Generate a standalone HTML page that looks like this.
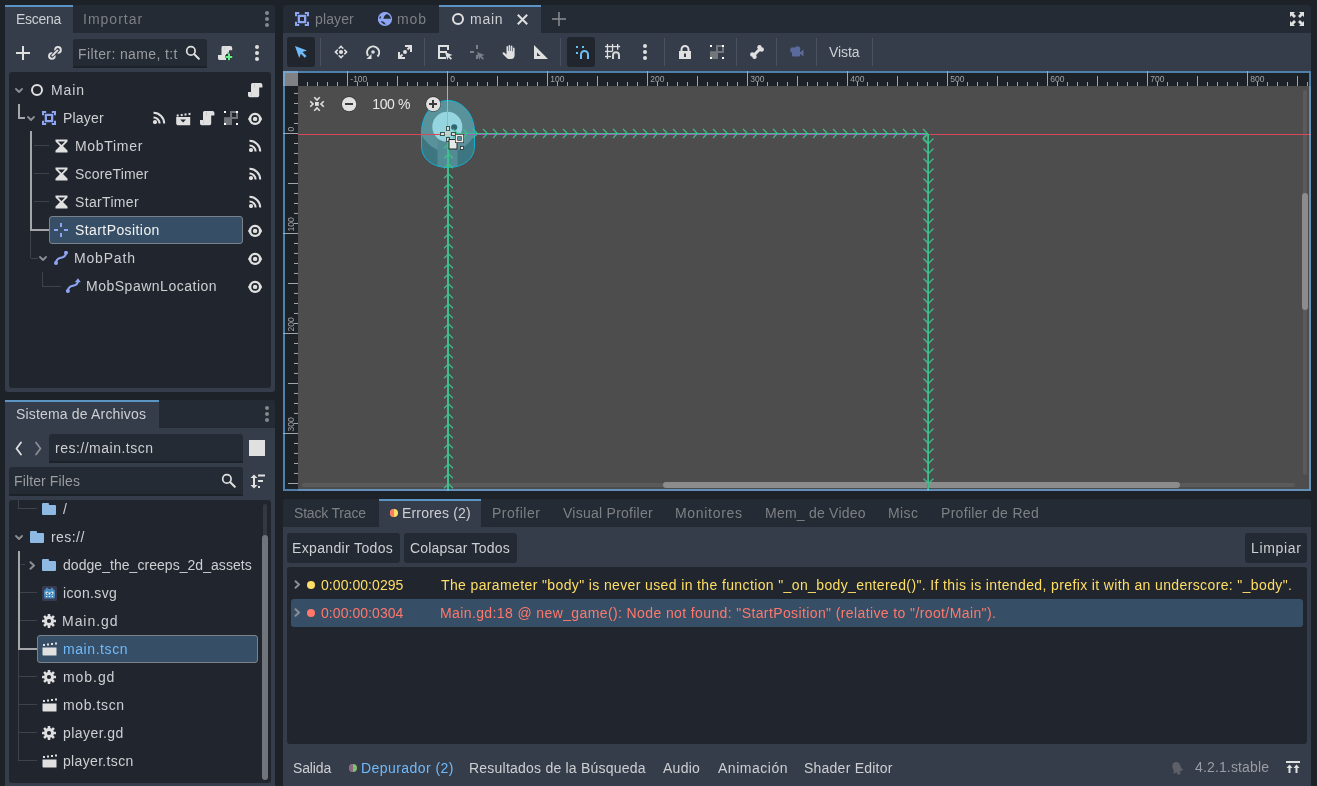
<!DOCTYPE html>
<html><head><meta charset="utf-8"><style>
html,body{margin:0;padding:0;width:1317px;height:786px;overflow:hidden;background:#1d2229;}
body{position:relative;font-family:"Liberation Sans",sans-serif;font-size:14px;}
body>div,body>span,body>svg{position:absolute;display:block;}
body>span{white-space:pre;will-change:transform;}

</style></head><body>
<div style="left:5px;top:5px;width:270px;height:28px;background:#252b34;border-radius:3px 3px 0 0;"></div>
<div style="left:5px;top:5px;width:68px;height:28px;background:#363d4a;"></div>
<div style="left:5px;top:5px;width:68px;height:2px;background:#5c94c6;"></div>
<span style="left:15.50px;top:9px;color:#cdcfd2;font-size:14px;line-height:20px;letter-spacing:-0.282px;">Escena</span>
<span style="left:83.00px;top:9px;color:#7d8085;font-size:14px;line-height:20px;letter-spacing:1.005px;">Importar</span>
<div style="left:264.5px;top:11px;width:4px;height:4px;border-radius:50%;background:#85888d"></div>
<div style="left:264.5px;top:17px;width:4px;height:4px;border-radius:50%;background:#85888d"></div>
<div style="left:264.5px;top:23px;width:4px;height:4px;border-radius:50%;background:#85888d"></div>
<div style="left:5px;top:33px;width:270px;height:359px;background:#363d4a;border-radius:0 0 3px 3px;"></div>
<svg style="left:16px;top:46px" width="14" height="14" viewBox="0 0 14 14"><rect x="6" y="0" width="2" height="14" fill="#e0e0e0"/><rect x="0" y="6" width="14" height="2" fill="#e0e0e0"/></svg>
<svg style="left:45px;top:43px" width="20" height="20" viewBox="0 0 20 20"><g fill="none" stroke-linecap="round"><path d="M9.7 13 A2.8 2.8 0 1 1 6.9 10.2" stroke="#e0e0e0" stroke-width="2"/><path d="M10.2 6.9 A2.8 2.8 0 1 1 13 9.7" stroke="#e0e0e0" stroke-width="2"/><path d="M7.4 12.5 L12.5 7.4" stroke="#363d4a" stroke-width="3.6"/><path d="M7.4 12.5 L12.5 7.4" stroke="#e0e0e0" stroke-width="1.8"/></g></svg>
<div style="left:73px;top:39px;width:134px;height:29px;background:#252b34;border-radius:3px 3px 0 0;box-sizing:border-box;border-bottom:2px solid #1d2229"></div>
<span style="left:78.40px;top:43.5px;color:#9a9ca1;font-size:14px;line-height:20px;letter-spacing:0.383px;">Filter: name, t:t</span>
<svg style="left:185px;top:45px" width="15" height="15" viewBox="0 0 15 15"><g fill="none" stroke="#e0e0e0"><circle cx="5.9" cy="5.9" r="4.2" stroke-width="1.7"/><path d="M9.3 9.3 L13.8 13.8" stroke-width="2" stroke-linecap="round"/></g></svg>
<svg style="left:218px;top:46px" width="15" height="15" viewBox="0 0 15 15"><path fill="#e0e0e0" d="M4.5 0 H12.5 Q14.2 0 14.2 2 V4.2 H11 V8 H8 V14.1 H1.8 Q0 14.1 0 12.5 V9.1 H3.5 V1.8 Q3.5 0 4.5 0Z"/><path fill="#c4c4c4" d="M6.5 0.8 H7.2 V4.2 H6.5Z"/><path fill="#21262e" d="M9.5 6.5 h3 v2.5 h2.5 v3 h-2.5 v3 h-3 v-3 h-2.5 v-3 h2.5z" opacity="0.6"/><path fill="#66f08a" d="M10 7.5 h2 v2.5 h2.3 v2 h-2.3 v2.3 h-2 v-2.3 h-2.2 v-2 h2.2z"/></svg>
<div style="left:254.5px;top:45px;width:4px;height:4px;border-radius:50%;background:#e0e0e0"></div>
<div style="left:254.5px;top:51px;width:4px;height:4px;border-radius:50%;background:#e0e0e0"></div>
<div style="left:254.5px;top:57px;width:4px;height:4px;border-radius:50%;background:#e0e0e0"></div>
<div style="left:9px;top:72px;width:262px;height:316px;background:#21262e;border-radius:3px;"></div>
<div style="left:18px;top:104px;width:2px;height:15px;background:#a4a6aa;"></div>
<div style="left:18px;top:117px;width:7px;height:2px;background:#a4a6aa;"></div>
<div style="left:30px;top:131px;width:2px;height:100px;background:#a4a6aa;"></div>
<div style="left:30px;top:229px;width:19px;height:2px;background:#a4a6aa;"></div>
<div style="left:30px;top:231px;width:1px;height:27px;background:#3d424b;"></div>
<div style="left:31px;top:258px;width:7px;height:1px;background:#3d424b;"></div>
<div style="left:34px;top:145px;width:15px;height:1px;background:#3d424b;"></div>
<div style="left:34px;top:173px;width:15px;height:1px;background:#3d424b;"></div>
<div style="left:34px;top:201px;width:15px;height:1px;background:#3d424b;"></div>
<div style="left:42px;top:272px;width:1px;height:15px;background:#3d424b;"></div>
<div style="left:43px;top:286px;width:18px;height:1px;background:#3d424b;"></div>
<div style="left:49px;top:216px;width:194px;height:28px;background:#374f66;border-radius:3px;box-sizing:border-box;border:1px solid #7b828c"></div>
<svg style="left:15px;top:88px" width="8" height="6" viewBox="0 0 8 6"><path d="M1 1 L4 4 L7 1" fill="none" stroke="#8b8e93" stroke-width="1.8" stroke-linecap="round" stroke-linejoin="round"/></svg>
<svg style="left:31px;top:84px" width="12" height="12" viewBox="0 0 12 12"><circle cx="6" cy="6" r="5" fill="none" stroke="#e0e0e0" stroke-width="2"/></svg>
<span style="left:50.90px;top:80px;color:#cdcfd2;font-size:14px;line-height:20px;letter-spacing:0.914px;">Main</span>
<svg style="left:248px;top:82.8px" width="15" height="15" viewBox="0 0 15 15"><path fill="#e0e0e0" d="M4.5 0 H12.5 Q14.4 0 14.4 2 V4.4 H11.2 V12.5 Q11.2 14.2 9.5 14.2 H1.8 Q0 14.2 0 12.5 V9 H3 V1.8 Q3 0 4.5 0Z"/><path fill="#c4c4c4" d="M6 0.8 H6.8 V4.4 H6Z M3 9 H3.6 V13 H3Z"/></svg>
<svg style="left:27px;top:116px" width="8" height="6" viewBox="0 0 8 6"><path d="M1 1 L4 4 L7 1" fill="none" stroke="#8b8e93" stroke-width="1.8" stroke-linecap="round" stroke-linejoin="round"/></svg>
<svg style="left:42px;top:111px" width="14" height="14" viewBox="0 0 14 14"><g fill="#8da5f3"><path d="M0 0 h4.2 v2 h-2.2 v2.2 h-2z"/><path d="M14 0 h-4.2 v2 h2.2 v2.2 h2z"/><path d="M0 14 h4.2 v-2 h-2.2 v-2.2 h-2z"/><path d="M14 14 h-4.2 v-2 h2.2 v-2.2 h2z"/><path fill-rule="evenodd" d="M2.7 2.7 h8.6 v8.6 h-8.6z M5 5 v4 h4 v-4z"/></g></svg>
<span style="left:62.70px;top:108px;color:#cdcfd2;font-size:14px;line-height:20px;letter-spacing:0.176px;">Player</span>
<svg style="left:152px;top:110px" width="14" height="14" viewBox="0 0 14 14"><g fill="none" stroke="#e0e0e0" stroke-width="2"><path d="M1.5 7.4 A6.1 6.1 0 0 1 7.6 13.5"/><path d="M1.5 2.8 A10.7 10.7 0 0 1 12.2 13.5"/></g><circle cx="3" cy="12" r="2.1" fill="#e0e0e0"/></svg>
<svg style="left:176px;top:112px" width="15" height="14" viewBox="0 0 15 14"><g fill="#e0e0e0"><rect x="0.7" y="2.5" width="2" height="2" transform="rotate(-10 1.7 3.5)"/><rect x="4.7" y="2" width="2" height="2" transform="rotate(-10 5.7 3)"/><rect x="8.5" y="1.5" width="2" height="2" transform="rotate(-10 9.5 2.5)"/><rect x="12.5" y="1" width="2" height="2" transform="rotate(-10 13.5 2)"/><path d="M0.2 5.1 H14.2 V13.3 H1.4 L0.2 12.1Z"/></g><path d="M4.2 7.4 H10 L7.1 10.6Z" fill="#21262e"/></svg>
<svg style="left:199.8px;top:110.8px" width="15" height="15" viewBox="0 0 15 15"><path fill="#e0e0e0" d="M4.5 0 H12.5 Q14.4 0 14.4 2 V4.4 H11.2 V12.5 Q11.2 14.2 9.5 14.2 H1.8 Q0 14.2 0 12.5 V9 H3 V1.8 Q3 0 4.5 0Z"/><path fill="#c4c4c4" d="M6 0.8 H6.8 V4.4 H6Z M3 9 H3.6 V13 H3Z"/></svg>
<svg style="left:224px;top:111px" width="14" height="14" viewBox="0 0 14 14"><g fill="#72757a"><rect x="0" y="6.2" width="8" height="7.8"/><path fill-rule="evenodd" d="M6 0 h8 v8 h-8z M8 2 v4 h4 v-4z"/></g><g fill="#ffffff"><rect x="0" y="0" width="2" height="2"/><rect x="12" y="0" width="2" height="2"/><rect x="0" y="12" width="2" height="2"/><rect x="12" y="12" width="2" height="2"/></g></svg>
<svg style="left:248px;top:112px" width="15" height="14" viewBox="0 0 15 14"><path fill="#e0e0e0" fill-rule="evenodd" d="M0 6.9 L1.9 3.6 A6.1 6.1 0 0 1 12.3 3.6 L14.2 6.9 L12.3 10.2 A6.1 6.1 0 0 1 1.9 10.2Z M7.1 3.1 A3.8 3.8 0 1 0 7.1 10.7 A3.8 3.8 0 1 0 7.1 3.1Z"/><circle cx="7.1" cy="6.9" r="2.2" fill="#e0e0e0"/></svg>
<svg style="left:248px;top:224px" width="15" height="14" viewBox="0 0 15 14"><path fill="#e0e0e0" fill-rule="evenodd" d="M0 6.9 L1.9 3.6 A6.1 6.1 0 0 1 12.3 3.6 L14.2 6.9 L12.3 10.2 A6.1 6.1 0 0 1 1.9 10.2Z M7.1 3.1 A3.8 3.8 0 1 0 7.1 10.7 A3.8 3.8 0 1 0 7.1 3.1Z"/><circle cx="7.1" cy="6.9" r="2.2" fill="#e0e0e0"/></svg>
<svg style="left:248px;top:252px" width="15" height="14" viewBox="0 0 15 14"><path fill="#e0e0e0" fill-rule="evenodd" d="M0 6.9 L1.9 3.6 A6.1 6.1 0 0 1 12.3 3.6 L14.2 6.9 L12.3 10.2 A6.1 6.1 0 0 1 1.9 10.2Z M7.1 3.1 A3.8 3.8 0 1 0 7.1 10.7 A3.8 3.8 0 1 0 7.1 3.1Z"/><circle cx="7.1" cy="6.9" r="2.2" fill="#e0e0e0"/></svg>
<svg style="left:248px;top:280px" width="15" height="14" viewBox="0 0 15 14"><path fill="#e0e0e0" fill-rule="evenodd" d="M0 6.9 L1.9 3.6 A6.1 6.1 0 0 1 12.3 3.6 L14.2 6.9 L12.3 10.2 A6.1 6.1 0 0 1 1.9 10.2Z M7.1 3.1 A3.8 3.8 0 1 0 7.1 10.7 A3.8 3.8 0 1 0 7.1 3.1Z"/><circle cx="7.1" cy="6.9" r="2.2" fill="#e0e0e0"/></svg>
<svg style="left:54.5px;top:139px" width="13" height="14" viewBox="0 0 13 14"><path fill="#e0e0e0" fill-rule="evenodd" d="M0.5 0.5 H12.5 V2.5 L8 7 L12.5 11.5 V13.5 H0.5 V11.5 L5 7 L0.5 2.5Z M3 2.5 L6.5 6 L10 2.5Z"/></svg>
<span style="left:75.00px;top:136px;color:#cdcfd2;font-size:14px;line-height:20px;letter-spacing:0.696px;">MobTimer</span>
<svg style="left:248px;top:138px" width="14" height="14" viewBox="0 0 14 14"><g fill="none" stroke="#e0e0e0" stroke-width="2"><path d="M1.5 7.4 A6.1 6.1 0 0 1 7.6 13.5"/><path d="M1.5 2.8 A10.7 10.7 0 0 1 12.2 13.5"/></g><circle cx="3" cy="12" r="2.1" fill="#e0e0e0"/></svg>
<svg style="left:54.5px;top:167px" width="13" height="14" viewBox="0 0 13 14"><path fill="#e0e0e0" fill-rule="evenodd" d="M0.5 0.5 H12.5 V2.5 L8 7 L12.5 11.5 V13.5 H0.5 V11.5 L5 7 L0.5 2.5Z M3 2.5 L6.5 6 L10 2.5Z"/></svg>
<span style="left:75.20px;top:164px;color:#cdcfd2;font-size:14px;line-height:20px;letter-spacing:0.171px;">ScoreTimer</span>
<svg style="left:248px;top:166px" width="14" height="14" viewBox="0 0 14 14"><g fill="none" stroke="#e0e0e0" stroke-width="2"><path d="M1.5 7.4 A6.1 6.1 0 0 1 7.6 13.5"/><path d="M1.5 2.8 A10.7 10.7 0 0 1 12.2 13.5"/></g><circle cx="3" cy="12" r="2.1" fill="#e0e0e0"/></svg>
<svg style="left:54.5px;top:195px" width="13" height="14" viewBox="0 0 13 14"><path fill="#e0e0e0" fill-rule="evenodd" d="M0.5 0.5 H12.5 V2.5 L8 7 L12.5 11.5 V13.5 H0.5 V11.5 L5 7 L0.5 2.5Z M3 2.5 L6.5 6 L10 2.5Z"/></svg>
<span style="left:75.20px;top:192px;color:#cdcfd2;font-size:14px;line-height:20px;letter-spacing:0.342px;">StarTimer</span>
<svg style="left:248px;top:194px" width="14" height="14" viewBox="0 0 14 14"><g fill="none" stroke="#e0e0e0" stroke-width="2"><path d="M1.5 7.4 A6.1 6.1 0 0 1 7.6 13.5"/><path d="M1.5 2.8 A10.7 10.7 0 0 1 12.2 13.5"/></g><circle cx="3" cy="12" r="2.1" fill="#e0e0e0"/></svg>
<svg style="left:54px;top:223px" width="14" height="14" viewBox="0 0 14 14"><g fill="#8da5f3"><rect x="6" y="0" width="2" height="4"/><rect x="6" y="10" width="2" height="4"/><rect x="0" y="6" width="4" height="2"/><rect x="10" y="6" width="4" height="2"/></g></svg>
<span style="left:75.20px;top:220px;color:#f2f2f2;font-size:14px;line-height:20px;letter-spacing:0.418px;">StartPosition</span>
<svg style="left:39px;top:256px" width="8" height="6" viewBox="0 0 8 6"><path d="M1 1 L4 4 L7 1" fill="none" stroke="#8b8e93" stroke-width="1.8" stroke-linecap="round" stroke-linejoin="round"/></svg>
<svg style="left:54px;top:251px" width="15" height="15" viewBox="0 0 15 15"><path d="M2 12 C2 8.5 4.5 7.3 7 6.8 C9.5 6.3 12 5 12 1.8" fill="none" stroke="#8da5f3" stroke-width="2"/><circle cx="2" cy="12" r="2" fill="#8da5f3"/><circle cx="12" cy="1.8" r="2" fill="#8da5f3"/></svg>
<span style="left:74.20px;top:248px;color:#cdcfd2;font-size:14px;line-height:20px;letter-spacing:0.825px;">MobPath</span>
<svg style="left:66px;top:278px" width="15" height="15" viewBox="0 0 15 15"><path d="M1.9 13 C1.9 9.5 4.5 8.3 7 7.8 C9.5 7.3 12 6 12 3" fill="none" stroke="#8da5f3" stroke-width="2"/><circle cx="1.9" cy="13" r="2" fill="#8da5f3"/><path d="M8.8 4.2 L12 0.2 L14.8 4.2Z" fill="#8da5f3"/></svg>
<span style="left:86.40px;top:276px;color:#cdcfd2;font-size:14px;line-height:20px;letter-spacing:0.508px;">MobSpawnLocation</span>
<div style="left:5px;top:400px;width:270px;height:28px;background:#252b34;border-radius:3px 3px 0 0;"></div>
<div style="left:5px;top:400px;width:154px;height:28px;background:#363d4a;"></div>
<div style="left:5px;top:400px;width:154px;height:2px;background:#5c94c6;"></div>
<span style="left:16.30px;top:404px;color:#cdcfd2;font-size:14px;line-height:20px;letter-spacing:0.172px;">Sistema de Archivos</span>
<div style="left:264.5px;top:406px;width:4px;height:4px;border-radius:50%;background:#85888d"></div>
<div style="left:264.5px;top:412px;width:4px;height:4px;border-radius:50%;background:#85888d"></div>
<div style="left:264.5px;top:418px;width:4px;height:4px;border-radius:50%;background:#85888d"></div>
<div style="left:5px;top:428px;width:270px;height:358px;background:#363d4a;"></div>
<svg style="left:14px;top:441px" width="9" height="15" viewBox="0 0 9 15"><path d="M7 1.5 L2.5 7.5 L7 13.5" fill="none" stroke="#e0e0e0" stroke-width="1.8" stroke-linecap="round" stroke-linejoin="round"/></svg>
<svg style="left:34px;top:441px" width="9" height="15" viewBox="0 0 9 15"><path d="M2 1.5 L6.5 7.5 L2 13.5" fill="none" stroke="#8a8d92" stroke-width="1.8" stroke-linecap="round" stroke-linejoin="round"/></svg>
<div style="left:49px;top:434px;width:194px;height:29px;background:#252b34;border-radius:3px 3px 0 0;box-sizing:border-box;border-bottom:2px solid #1d2229"></div>
<span style="left:55.30px;top:438px;color:#cdcfd2;font-size:14px;line-height:20px;letter-spacing:0.497px;">res://main.tscn</span>
<div style="left:249px;top:440px;width:16px;height:16px;background:#e0e0e0;"></div>
<div style="left:9px;top:467px;width:234px;height:29px;background:#252b34;border-radius:3px 3px 0 0;box-sizing:border-box;border-bottom:2px solid #1d2229"></div>
<span style="left:14.40px;top:471px;color:#9a9ca1;font-size:14px;line-height:20px;letter-spacing:0.122px;">Filter Files</span>
<svg style="left:221px;top:473px" width="15" height="15" viewBox="0 0 15 15"><g fill="none" stroke="#e0e0e0"><circle cx="5.9" cy="5.9" r="4.2" stroke-width="1.7"/><path d="M9.3 9.3 L13.8 13.8" stroke-width="2" stroke-linecap="round"/></g></svg>
<svg style="left:249.5px;top:473.8px" width="16" height="16" viewBox="0 0 16 16"><g fill="#e0e0e0"><path d="M4 0.5 L7.5 4 H5 V11 H7.5 L4 14.5 L0.5 11 H3 V4 H0.5Z"/><rect x="8" y="0.5" width="7" height="2"/><rect x="8" y="6" width="5" height="2"/><rect x="8" y="12" width="2" height="2"/></g></svg>
<div style="left:9px;top:500px;width:262px;height:283px;background:#21262e;border-radius:3px;"></div>
<div style="left:18px;top:500px;width:1px;height:9px;background:#3d424b;"></div>
<div style="left:19px;top:508px;width:18px;height:1px;background:#3d424b;"></div>
<div style="left:18px;top:551px;width:2px;height:99px;background:#a4a6aa;"></div>
<div style="left:18px;top:648px;width:19px;height:2px;background:#a4a6aa;"></div>
<div style="left:18px;top:650px;width:1px;height:111px;background:#3d424b;"></div>
<div style="left:21px;top:564px;width:4px;height:1px;background:#3d424b;"></div>
<div style="left:20px;top:592px;width:17px;height:1px;background:#3d424b;"></div>
<div style="left:20px;top:620px;width:17px;height:1px;background:#3d424b;"></div>
<div style="left:19px;top:676px;width:18px;height:1px;background:#3d424b;"></div>
<div style="left:19px;top:704px;width:18px;height:1px;background:#3d424b;"></div>
<div style="left:19px;top:732px;width:18px;height:1px;background:#3d424b;"></div>
<div style="left:19px;top:760px;width:18px;height:1px;background:#3d424b;"></div>
<div style="left:37px;top:635px;width:221px;height:28px;background:#374f66;border-radius:3px;box-sizing:border-box;border:1px solid #7b828c"></div>
<div style="left:263px;top:504px;width:4px;height:276px;background:#333843;border-radius:2px;"></div>
<div style="left:262px;top:535px;width:6px;height:245px;background:#70747b;border-radius:3px;"></div>
<svg style="left:42px;top:503px" width="14" height="12" viewBox="0 0 14 12"><path fill="#8db9e2" d="M0 1 Q0 0 1 0 H6 Q7 0 7 1 V2 H13 Q14 2 14 3 V11 Q14 12 13 12 H1 Q0 12 0 11Z"/></svg>
<span style="left:62.80px;top:499px;color:#cdcfd2;font-size:14px;line-height:20px;letter-spacing:0.300px;">/</span>
<svg style="left:15px;top:535px" width="8" height="6" viewBox="0 0 8 6"><path d="M1 1 L4 4 L7 1" fill="none" stroke="#8b8e93" stroke-width="1.8" stroke-linecap="round" stroke-linejoin="round"/></svg>
<svg style="left:30px;top:531px" width="14" height="12" viewBox="0 0 14 12"><path fill="#8db9e2" d="M0 1 Q0 0 1 0 H6 Q7 0 7 1 V2 H13 Q14 2 14 3 V11 Q14 12 13 12 H1 Q0 12 0 11Z"/></svg>
<span style="left:51.40px;top:527px;color:#cdcfd2;font-size:14px;line-height:20px;letter-spacing:0.434px;">res://</span>
<svg style="left:28.5px;top:560.5px" width="7" height="9" viewBox="0 0 7 9"><path d="M1.5 1.2 L5 4.5 L1.5 7.8" fill="none" stroke="#8b8e93" stroke-width="2" stroke-linecap="round" stroke-linejoin="round"/></svg>
<svg style="left:42px;top:559px" width="14" height="12" viewBox="0 0 14 12"><path fill="#8db9e2" d="M0 1 Q0 0 1 0 H6 Q7 0 7 1 V2 H13 Q14 2 14 3 V11 Q14 12 13 12 H1 Q0 12 0 11Z"/></svg>
<span style="left:63.30px;top:555px;color:#cdcfd2;font-size:14px;line-height:20px;letter-spacing:0.044px;">dodge_the_creeps_2d_assets</span>
<svg style="left:42px;top:586px" width="15" height="15" viewBox="0 0 15 15"><rect x="0" y="0" width="15" height="15" rx="1.5" fill="#363b52"/><path fill="#478cbf" d="M4 2.2 L5.5 1.5 L6.5 3 H8.5 L9.5 1.5 L11 2.2 L11.8 3.8 L13 4.5 V9.5 L12.5 12.5 H2.5 L2 9.5 V4.5 L3.2 3.8Z"/><g fill="#fff"><circle cx="5" cy="7" r="1.5"/><circle cx="10" cy="7" r="1.5"/><rect x="7" y="6.5" width="1" height="2"/><rect x="4" y="10" width="1.2" height="1"/><rect x="6.9" y="10" width="1.2" height="1"/><rect x="9.8" y="10" width="1.2" height="1"/></g><g fill="#414042"><circle cx="5.3" cy="7.2" r="0.8"/><circle cx="9.7" cy="7.2" r="0.8"/></g></svg>
<span style="left:62.90px;top:583px;color:#cdcfd2;font-size:14px;line-height:20px;letter-spacing:0.347px;">icon.svg</span>
<svg style="left:42px;top:614px" width="14" height="14" viewBox="0 0 14 14"><g fill="#e0e0e0"><rect x="5.7" y="0" width="2.6" height="3" rx="0.5" transform="rotate(0 7 7)"/><rect x="5.7" y="0" width="2.6" height="3" rx="0.5" transform="rotate(45 7 7)"/><rect x="5.7" y="0" width="2.6" height="3" rx="0.5" transform="rotate(90 7 7)"/><rect x="5.7" y="0" width="2.6" height="3" rx="0.5" transform="rotate(135 7 7)"/><rect x="5.7" y="0" width="2.6" height="3" rx="0.5" transform="rotate(180 7 7)"/><rect x="5.7" y="0" width="2.6" height="3" rx="0.5" transform="rotate(225 7 7)"/><rect x="5.7" y="0" width="2.6" height="3" rx="0.5" transform="rotate(270 7 7)"/><rect x="5.7" y="0" width="2.6" height="3" rx="0.5" transform="rotate(315 7 7)"/><circle cx="7" cy="7" r="5"/></g><circle cx="7" cy="7" r="2.1" fill="#21262e"/></svg>
<span style="left:61.90px;top:611px;color:#cdcfd2;font-size:14px;line-height:20px;letter-spacing:0.963px;">Main.gd</span>
<svg style="left:42px;top:642px" width="15" height="14" viewBox="0 0 15 14"><g fill="#e0e0e0"><rect x="1" y="2" width="2" height="2"/><rect x="5" y="1.5" width="2" height="2"/><rect x="9" y="1" width="2" height="2"/><rect x="13" y="0.5" width="2" height="2"/><path d="M0.5 5.5 H14.5 V13.5 H1.5 C1 13.5 0.5 13 0.5 12.5Z"/></g></svg>
<span style="left:62.90px;top:639px;color:#70bafa;font-size:14px;line-height:20px;letter-spacing:0.572px;">main.tscn</span>
<svg style="left:42px;top:670px" width="14" height="14" viewBox="0 0 14 14"><g fill="#e0e0e0"><rect x="5.7" y="0" width="2.6" height="3" rx="0.5" transform="rotate(0 7 7)"/><rect x="5.7" y="0" width="2.6" height="3" rx="0.5" transform="rotate(45 7 7)"/><rect x="5.7" y="0" width="2.6" height="3" rx="0.5" transform="rotate(90 7 7)"/><rect x="5.7" y="0" width="2.6" height="3" rx="0.5" transform="rotate(135 7 7)"/><rect x="5.7" y="0" width="2.6" height="3" rx="0.5" transform="rotate(180 7 7)"/><rect x="5.7" y="0" width="2.6" height="3" rx="0.5" transform="rotate(225 7 7)"/><rect x="5.7" y="0" width="2.6" height="3" rx="0.5" transform="rotate(270 7 7)"/><rect x="5.7" y="0" width="2.6" height="3" rx="0.5" transform="rotate(315 7 7)"/><circle cx="7" cy="7" r="5"/></g><circle cx="7" cy="7" r="2.1" fill="#21262e"/></svg>
<span style="left:62.90px;top:667px;color:#cdcfd2;font-size:14px;line-height:20px;letter-spacing:0.938px;">mob.gd</span>
<svg style="left:42px;top:698px" width="15" height="14" viewBox="0 0 15 14"><g fill="#e0e0e0"><rect x="1" y="2" width="2" height="2"/><rect x="5" y="1.5" width="2" height="2"/><rect x="9" y="1" width="2" height="2"/><rect x="13" y="0.5" width="2" height="2"/><path d="M0.5 5.5 H14.5 V13.5 H1.5 C1 13.5 0.5 13 0.5 12.5Z"/></g></svg>
<span style="left:62.90px;top:695px;color:#cdcfd2;font-size:14px;line-height:20px;letter-spacing:0.612px;">mob.tscn</span>
<svg style="left:42px;top:726px" width="14" height="14" viewBox="0 0 14 14"><g fill="#e0e0e0"><rect x="5.7" y="0" width="2.6" height="3" rx="0.5" transform="rotate(0 7 7)"/><rect x="5.7" y="0" width="2.6" height="3" rx="0.5" transform="rotate(45 7 7)"/><rect x="5.7" y="0" width="2.6" height="3" rx="0.5" transform="rotate(90 7 7)"/><rect x="5.7" y="0" width="2.6" height="3" rx="0.5" transform="rotate(135 7 7)"/><rect x="5.7" y="0" width="2.6" height="3" rx="0.5" transform="rotate(180 7 7)"/><rect x="5.7" y="0" width="2.6" height="3" rx="0.5" transform="rotate(225 7 7)"/><rect x="5.7" y="0" width="2.6" height="3" rx="0.5" transform="rotate(270 7 7)"/><rect x="5.7" y="0" width="2.6" height="3" rx="0.5" transform="rotate(315 7 7)"/><circle cx="7" cy="7" r="5"/></g><circle cx="7" cy="7" r="2.1" fill="#21262e"/></svg>
<span style="left:62.90px;top:723px;color:#cdcfd2;font-size:14px;line-height:20px;letter-spacing:0.433px;">player.gd</span>
<svg style="left:42px;top:754px" width="15" height="14" viewBox="0 0 15 14"><g fill="#e0e0e0"><rect x="1" y="2" width="2" height="2"/><rect x="5" y="1.5" width="2" height="2"/><rect x="9" y="1" width="2" height="2"/><rect x="13" y="0.5" width="2" height="2"/><path d="M0.5 5.5 H14.5 V13.5 H1.5 C1 13.5 0.5 13 0.5 12.5Z"/></g></svg>
<span style="left:62.90px;top:751px;color:#cdcfd2;font-size:14px;line-height:20px;letter-spacing:0.336px;">player.tscn</span>
<div style="left:283px;top:5px;width:1028px;height:28px;background:#252b34;border-radius:3px 3px 0 0;"></div>
<svg style="left:295px;top:12px" width="14" height="14" viewBox="0 0 14 14"><g fill="#8da5f3"><path d="M0 0 h4.2 v2 h-2.2 v2.2 h-2z"/><path d="M14 0 h-4.2 v2 h2.2 v2.2 h2z"/><path d="M0 14 h4.2 v-2 h-2.2 v-2.2 h-2z"/><path d="M14 14 h-4.2 v-2 h2.2 v-2.2 h2z"/><path fill-rule="evenodd" d="M2.7 2.7 h8.6 v8.6 h-8.6z M5 5 v4 h4 v-4z"/></g></svg>
<span style="left:314.90px;top:9px;color:#7d8085;font-size:14px;line-height:20px;letter-spacing:0.126px;">player</span>
<svg style="left:378px;top:12px" width="15" height="15" viewBox="0 0 15 15"><circle cx="7" cy="7" r="7.1" fill="#8da5f3"/><g fill="#252b34"><path d="M5.4 6.7 Q6.5 2.3 9 2.2 Q11.5 2.3 13 6.7Z"/><path d="M2.6 9.6 Q4.5 8.9 6 10.2 L8 12.5 Q5.5 12.8 2.6 9.6Z"/><path d="M1.6 4.8 L3 4.2 L2.8 6.6 L1.3 6.6Z"/></g></svg>
<span style="left:397.30px;top:9px;color:#7d8085;font-size:14px;line-height:20px;letter-spacing:0.876px;">mob</span>
<div style="left:439px;top:5px;width:102px;height:28px;background:#363d4a;"></div>
<div style="left:439px;top:5px;width:102px;height:2px;background:#5c94c6;"></div>
<svg style="left:452px;top:13px" width="12" height="12" viewBox="0 0 12 12"><circle cx="6" cy="6" r="5" fill="none" stroke="#e0e0e0" stroke-width="2"/></svg>
<span style="left:470.20px;top:9px;color:#cdcfd2;font-size:14px;line-height:20px;letter-spacing:0.747px;">main</span>
<svg style="left:516px;top:13px" width="13" height="13" viewBox="0 0 13 13"><path d="M1.8 1.8 L11.2 11.2 M11.2 1.8 L1.8 11.2" stroke="#e0e0e0" stroke-width="2"/></svg>
<svg style="left:552px;top:12px" width="14" height="14" viewBox="0 0 14 14"><rect x="6.2" y="0" width="1.6" height="14" fill="#84878c"/><rect x="0" y="6.2" width="14" height="1.6" fill="#84878c"/></svg>
<svg style="left:1290px;top:12px" width="14" height="14" viewBox="0 0 14 14"><g fill="#e0e0e0"><path d="M0 0 H5 L3.5 1.5 L6 4 L4 6 L1.5 3.5 L0 5Z"/><path d="M14 0 H9 L10.5 1.5 L8 4 L10 6 L12.5 3.5 L14 5Z"/><path d="M0 14 H5 L3.5 12.5 L6 10 L4 8 L1.5 10.5 L0 9Z"/><path d="M14 14 H9 L10.5 12.5 L8 10 L10 8 L12.5 10.5 L14 9Z"/></g></svg>
<div style="left:283px;top:33px;width:1028px;height:38px;background:#363d4a;"></div>
<div style="left:287px;top:37px;width:28px;height:30px;background:#21262e;border-radius:3px;"></div>
<div style="left:567px;top:37px;width:28px;height:30px;background:#21262e;border-radius:3px;"></div>
<div style="left:320px;top:38px;width:1px;height:28px;background:#4b515c;"></div>
<div style="left:424px;top:38px;width:1px;height:28px;background:#4b515c;"></div>
<div style="left:560px;top:38px;width:1px;height:28px;background:#4b515c;"></div>
<div style="left:664px;top:38px;width:1px;height:28px;background:#4b515c;"></div>
<div style="left:736px;top:38px;width:1px;height:28px;background:#4b515c;"></div>
<div style="left:776px;top:38px;width:1px;height:28px;background:#4b515c;"></div>
<div style="left:816px;top:38px;width:1px;height:28px;background:#4b515c;"></div>
<div style="left:872px;top:38px;width:1px;height:28px;background:#4b515c;"></div>
<svg style="left:294px;top:45px" width="16" height="16" viewBox="0 0 16 16"><path fill="#70bafa" d="M1 1 L13 5.5 L8.5 7 L12.5 11 L10.8 12.7 L6.8 8.7 L5.2 13Z"/></svg>
<svg style="left:334px;top:45px" width="14" height="14" viewBox="0 0 14 14"><g fill="#e0e0e0"><circle cx="7" cy="7" r="2.1"/><path d="M4.1 3.3 L7 0.3 L9.9 3.3 L8.6 4.1 L7 2.6 L5.4 4.1Z"/><path d="M4.1 3.3 L7 0.3 L9.9 3.3 L8.6 4.1 L7 2.6 L5.4 4.1Z" transform="rotate(90 7 7)"/><path d="M4.1 3.3 L7 0.3 L9.9 3.3 L8.6 4.1 L7 2.6 L5.4 4.1Z" transform="rotate(180 7 7)"/><path d="M4.1 3.3 L7 0.3 L9.9 3.3 L8.6 4.1 L7 2.6 L5.4 4.1Z" transform="rotate(270 7 7)"/></g></svg>
<svg style="left:366px;top:45px" width="14" height="14" viewBox="0 0 14 14"><g fill="none" stroke="#e0e0e0" stroke-width="2"><path d="M11.5 11.5 A6 6 0 1 0 2.2 10.8"/></g><circle cx="7" cy="7" r="1.8" fill="#e0e0e0"/><path d="M0.5 14 H5.5 V9 Z" fill="#e0e0e0"/></svg>
<svg style="left:398px;top:45px" width="14" height="14" viewBox="0 0 14 14"><g fill="#e0e0e0"><path d="M7 0 H14 V7 H12 V3.4 L10.2 5.2 L8.8 3.8 L10.6 2 H7Z"/><path d="M0 7 H2 V10.6 L3.8 8.8 L5.2 10.2 L3.4 12 H7 V14 H0Z"/><circle cx="7" cy="7" r="2"/></g></svg>
<svg style="left:438px;top:45px" width="15" height="15" viewBox="0 0 15 15"><g fill="#e0e0e0"><rect x="0" y="0" width="2" height="14"/><rect x="0" y="0" width="11" height="2"/><rect x="0" y="6" width="9" height="2"/><rect x="0" y="12" width="8" height="2"/><rect x="9" y="0" width="2" height="5"/><path d="M7 7 L14.5 10 L11.5 11 L14 13.5 L12.8 14.7 L10.3 12.2 L9.3 15Z"/></g></svg>
<svg style="left:470px;top:45px" width="15" height="15" viewBox="0 0 15 15"><g fill="#7c7f85"><rect x="6" y="0" width="2" height="4"/><rect x="0" y="6" width="4" height="2"/><rect x="6" y="10" width="2" height="4"/><rect x="10" y="6" width="4" height="2" opacity="0"/><path d="M7 7 L14.5 10 L11.5 11 L14 13.5 L12.8 14.7 L10.3 12.2 L9.3 15Z"/></g></svg>
<svg style="left:502px;top:45px" width="14" height="14" viewBox="0 0 14 14"><path fill="#e0e0e0" d="M4.5 2 Q4.5 1 5.3 1 Q6 1 6 2 V6 H6.6 V1 Q6.6 0 7.4 0 Q8.2 0 8.2 1 V6 H8.8 V1.5 Q8.8 0.6 9.6 0.6 Q10.4 0.6 10.4 1.5 V6.5 H11 V3.5 Q11 2.6 11.8 2.6 Q12.6 2.6 12.6 3.5 V10 Q12.6 14 9 14 H7 Q5.5 14 4.5 12.8 L0.8 9 Q0.3 8.2 1 7.6 Q1.8 7 2.6 7.8 L4.5 9.5Z"/></svg>
<svg style="left:534px;top:45px" width="15" height="14" viewBox="0 0 15 14"><path fill="#e0e0e0" fill-rule="evenodd" d="M0 0 L14 14 H0Z M3 7.5 V11 H6.5Z"/></svg>
<svg style="left:574px;top:45px" width="16" height="15" viewBox="0 0 16 15"><g fill="#6cc0f0"><rect x="2" y="1" width="2" height="2"/><rect x="8" y="1" width="2" height="2"/><rect x="2" y="7" width="2" height="2"/></g><path d="M7 14 V9.5 A3.5 3.5 0 0 1 14 9.5 V14" fill="none" stroke="#6cc0f0" stroke-width="2"/></svg>
<svg style="left:604px;top:43px" width="17" height="17" viewBox="0 0 17 17"><g fill="#e0e0e0"><rect x="2.8" y="1" width="1.3" height="15"/><rect x="7.9" y="1" width="1.3" height="7.4"/><rect x="13" y="1" width="1.3" height="5.8"/><rect x="1" y="2.9" width="15.1" height="1.3"/><rect x="1" y="7.8" width="7.5" height="1.3"/><rect x="1" y="12.9" width="6" height="1.3"/></g><path d="M9 16 V12.2 A3 3 0 0 1 15 12.2 V16" fill="none" stroke="#d6d6d6" stroke-width="2"/></svg>
<div style="left:643px;top:44px;width:4px;height:4px;border-radius:50%;background:#e0e0e0"></div>
<div style="left:643px;top:50px;width:4px;height:4px;border-radius:50%;background:#e0e0e0"></div>
<div style="left:643px;top:56px;width:4px;height:4px;border-radius:50%;background:#e0e0e0"></div>
<svg style="left:678px;top:45px" width="14" height="14" viewBox="0 0 14 14"><path fill="none" stroke="#e0e0e0" stroke-width="2" d="M3.5 6.5 V4.5 A3.5 3.5 0 0 1 10.5 4.5 V6.5"/><path fill="#e0e0e0" fill-rule="evenodd" d="M1 6 H13 V14 H1Z M6 8.5 H8 V12 H6Z"/></svg>
<svg style="left:710px;top:45px" width="14" height="14" viewBox="0 0 14 14"><g fill="#72757a"><rect x="0" y="6.2" width="8" height="7.8"/><path fill-rule="evenodd" d="M6 0 h8 v8 h-8z M8 2 v4 h4 v-4z"/></g><g fill="#ffffff"><rect x="0" y="0" width="2" height="2"/><rect x="12" y="0" width="2" height="2"/><rect x="0" y="12" width="2" height="2"/><rect x="12" y="12" width="2" height="2"/></g></svg>
<svg style="left:750px;top:45px" width="14" height="14" viewBox="0 0 14 14"><g fill="#e0e0e0"><path d="M4 10 L10 4" stroke="#e0e0e0" stroke-width="3"/><circle cx="9.5" cy="2.3" r="2.2"/><circle cx="11.7" cy="4.5" r="2.2"/><circle cx="2.3" cy="9.5" r="2.2"/><circle cx="4.5" cy="11.7" r="2.2"/></g></svg>
<svg style="left:790px;top:46px" width="14" height="12" viewBox="0 0 14 12"><g fill="#5a6a9c"><circle cx="3" cy="4" r="2.8"/><circle cx="7.5" cy="3" r="2.8"/><rect x="2" y="4" width="8" height="6.5" rx="1"/><path d="M9 7 L13.5 3.5 V10.5Z"/></g></svg>
<span style="left:829.20px;top:42px;color:#cdcfd2;font-size:14px;line-height:20px;letter-spacing:-0.071px;">Vista</span>
<div style="left:283px;top:71px;width:1028px;height:15px;background:#1d2229;"></div>
<div style="left:283px;top:86px;width:15px;height:405px;background:#1d2229;"></div>
<div style="left:283px;top:71px;width:15px;height:15px;background:#808184;"></div>
<div style="left:298px;top:86px;width:1013px;height:405px;background:#4d4d4d;"></div>
<svg style="left:283px;top:71px" width="1028" height="15" viewBox="0 0 1028 15"><rect x="24" y="11" width="1" height="4" fill="#a3a4a6"/><rect x="34" y="11" width="1" height="4" fill="#a3a4a6"/><rect x="44" y="11" width="1" height="4" fill="#a3a4a6"/><rect x="54" y="11" width="1" height="4" fill="#a3a4a6"/><rect x="64" y="0" width="1" height="15" fill="#a3a4a6"/><rect x="74" y="11" width="1" height="4" fill="#a3a4a6"/><rect x="84" y="11" width="1" height="4" fill="#a3a4a6"/><rect x="94" y="11" width="1" height="4" fill="#a3a4a6"/><rect x="104" y="11" width="1" height="4" fill="#a3a4a6"/><rect x="114" y="5" width="1" height="10" fill="#a3a4a6"/><rect x="124" y="11" width="1" height="4" fill="#a3a4a6"/><rect x="134" y="11" width="1" height="4" fill="#a3a4a6"/><rect x="144" y="11" width="1" height="4" fill="#a3a4a6"/><rect x="154" y="11" width="1" height="4" fill="#a3a4a6"/><rect x="164" y="0" width="1" height="15" fill="#a3a4a6"/><rect x="174" y="11" width="1" height="4" fill="#a3a4a6"/><rect x="184" y="11" width="1" height="4" fill="#a3a4a6"/><rect x="194" y="11" width="1" height="4" fill="#a3a4a6"/><rect x="204" y="11" width="1" height="4" fill="#a3a4a6"/><rect x="214" y="5" width="1" height="10" fill="#a3a4a6"/><rect x="224" y="11" width="1" height="4" fill="#a3a4a6"/><rect x="234" y="11" width="1" height="4" fill="#a3a4a6"/><rect x="244" y="11" width="1" height="4" fill="#a3a4a6"/><rect x="254" y="11" width="1" height="4" fill="#a3a4a6"/><rect x="264" y="0" width="1" height="15" fill="#a3a4a6"/><rect x="274" y="11" width="1" height="4" fill="#a3a4a6"/><rect x="284" y="11" width="1" height="4" fill="#a3a4a6"/><rect x="294" y="11" width="1" height="4" fill="#a3a4a6"/><rect x="304" y="11" width="1" height="4" fill="#a3a4a6"/><rect x="314" y="5" width="1" height="10" fill="#a3a4a6"/><rect x="324" y="11" width="1" height="4" fill="#a3a4a6"/><rect x="334" y="11" width="1" height="4" fill="#a3a4a6"/><rect x="344" y="11" width="1" height="4" fill="#a3a4a6"/><rect x="354" y="11" width="1" height="4" fill="#a3a4a6"/><rect x="364" y="0" width="1" height="15" fill="#a3a4a6"/><rect x="374" y="11" width="1" height="4" fill="#a3a4a6"/><rect x="384" y="11" width="1" height="4" fill="#a3a4a6"/><rect x="394" y="11" width="1" height="4" fill="#a3a4a6"/><rect x="404" y="11" width="1" height="4" fill="#a3a4a6"/><rect x="414" y="5" width="1" height="10" fill="#a3a4a6"/><rect x="424" y="11" width="1" height="4" fill="#a3a4a6"/><rect x="434" y="11" width="1" height="4" fill="#a3a4a6"/><rect x="444" y="11" width="1" height="4" fill="#a3a4a6"/><rect x="454" y="11" width="1" height="4" fill="#a3a4a6"/><rect x="464" y="0" width="1" height="15" fill="#a3a4a6"/><rect x="474" y="11" width="1" height="4" fill="#a3a4a6"/><rect x="484" y="11" width="1" height="4" fill="#a3a4a6"/><rect x="494" y="11" width="1" height="4" fill="#a3a4a6"/><rect x="504" y="11" width="1" height="4" fill="#a3a4a6"/><rect x="514" y="5" width="1" height="10" fill="#a3a4a6"/><rect x="524" y="11" width="1" height="4" fill="#a3a4a6"/><rect x="534" y="11" width="1" height="4" fill="#a3a4a6"/><rect x="544" y="11" width="1" height="4" fill="#a3a4a6"/><rect x="554" y="11" width="1" height="4" fill="#a3a4a6"/><rect x="564" y="0" width="1" height="15" fill="#a3a4a6"/><rect x="574" y="11" width="1" height="4" fill="#a3a4a6"/><rect x="584" y="11" width="1" height="4" fill="#a3a4a6"/><rect x="594" y="11" width="1" height="4" fill="#a3a4a6"/><rect x="604" y="11" width="1" height="4" fill="#a3a4a6"/><rect x="614" y="5" width="1" height="10" fill="#a3a4a6"/><rect x="624" y="11" width="1" height="4" fill="#a3a4a6"/><rect x="634" y="11" width="1" height="4" fill="#a3a4a6"/><rect x="644" y="11" width="1" height="4" fill="#a3a4a6"/><rect x="654" y="11" width="1" height="4" fill="#a3a4a6"/><rect x="664" y="0" width="1" height="15" fill="#a3a4a6"/><rect x="674" y="11" width="1" height="4" fill="#a3a4a6"/><rect x="684" y="11" width="1" height="4" fill="#a3a4a6"/><rect x="694" y="11" width="1" height="4" fill="#a3a4a6"/><rect x="704" y="11" width="1" height="4" fill="#a3a4a6"/><rect x="714" y="5" width="1" height="10" fill="#a3a4a6"/><rect x="724" y="11" width="1" height="4" fill="#a3a4a6"/><rect x="734" y="11" width="1" height="4" fill="#a3a4a6"/><rect x="744" y="11" width="1" height="4" fill="#a3a4a6"/><rect x="754" y="11" width="1" height="4" fill="#a3a4a6"/><rect x="764" y="0" width="1" height="15" fill="#a3a4a6"/><rect x="774" y="11" width="1" height="4" fill="#a3a4a6"/><rect x="784" y="11" width="1" height="4" fill="#a3a4a6"/><rect x="794" y="11" width="1" height="4" fill="#a3a4a6"/><rect x="804" y="11" width="1" height="4" fill="#a3a4a6"/><rect x="814" y="5" width="1" height="10" fill="#a3a4a6"/><rect x="824" y="11" width="1" height="4" fill="#a3a4a6"/><rect x="834" y="11" width="1" height="4" fill="#a3a4a6"/><rect x="844" y="11" width="1" height="4" fill="#a3a4a6"/><rect x="854" y="11" width="1" height="4" fill="#a3a4a6"/><rect x="864" y="0" width="1" height="15" fill="#a3a4a6"/><rect x="874" y="11" width="1" height="4" fill="#a3a4a6"/><rect x="884" y="11" width="1" height="4" fill="#a3a4a6"/><rect x="894" y="11" width="1" height="4" fill="#a3a4a6"/><rect x="904" y="11" width="1" height="4" fill="#a3a4a6"/><rect x="914" y="5" width="1" height="10" fill="#a3a4a6"/><rect x="924" y="11" width="1" height="4" fill="#a3a4a6"/><rect x="934" y="11" width="1" height="4" fill="#a3a4a6"/><rect x="944" y="11" width="1" height="4" fill="#a3a4a6"/><rect x="954" y="11" width="1" height="4" fill="#a3a4a6"/><rect x="964" y="0" width="1" height="15" fill="#a3a4a6"/><rect x="974" y="11" width="1" height="4" fill="#a3a4a6"/><rect x="984" y="11" width="1" height="4" fill="#a3a4a6"/><rect x="994" y="11" width="1" height="4" fill="#a3a4a6"/><rect x="1004" y="11" width="1" height="4" fill="#a3a4a6"/><rect x="1014" y="5" width="1" height="10" fill="#a3a4a6"/><rect x="1024" y="11" width="1" height="4" fill="#a3a4a6"/><text x="67.3" y="10.8" fill="#a3a4a6" font-size="8.5" font-family="Liberation Sans">-100</text><text x="167.3" y="10.8" fill="#a3a4a6" font-size="8.5" font-family="Liberation Sans">0</text><text x="267.3" y="10.8" fill="#a3a4a6" font-size="8.5" font-family="Liberation Sans">100</text><text x="367.3" y="10.8" fill="#a3a4a6" font-size="8.5" font-family="Liberation Sans">200</text><text x="467.3" y="10.8" fill="#a3a4a6" font-size="8.5" font-family="Liberation Sans">300</text><text x="567.3" y="10.8" fill="#a3a4a6" font-size="8.5" font-family="Liberation Sans">400</text><text x="667.3" y="10.8" fill="#a3a4a6" font-size="8.5" font-family="Liberation Sans">500</text><text x="767.3" y="10.8" fill="#a3a4a6" font-size="8.5" font-family="Liberation Sans">600</text><text x="867.3" y="10.8" fill="#a3a4a6" font-size="8.5" font-family="Liberation Sans">700</text><text x="967.3" y="10.8" fill="#a3a4a6" font-size="8.5" font-family="Liberation Sans">800</text></svg>
<svg style="left:283px;top:86px" width="15" height="405" viewBox="0 0 15 405"><rect x="11" y="7" width="4" height="1" fill="#a3a4a6"/><rect x="11" y="17" width="4" height="1" fill="#a3a4a6"/><rect x="11" y="27" width="4" height="1" fill="#a3a4a6"/><rect x="11" y="37" width="4" height="1" fill="#a3a4a6"/><rect x="0" y="47" width="15" height="1" fill="#a3a4a6"/><rect x="11" y="57" width="4" height="1" fill="#a3a4a6"/><rect x="11" y="67" width="4" height="1" fill="#a3a4a6"/><rect x="11" y="77" width="4" height="1" fill="#a3a4a6"/><rect x="11" y="87" width="4" height="1" fill="#a3a4a6"/><rect x="5" y="97" width="10" height="1" fill="#a3a4a6"/><rect x="11" y="107" width="4" height="1" fill="#a3a4a6"/><rect x="11" y="117" width="4" height="1" fill="#a3a4a6"/><rect x="11" y="127" width="4" height="1" fill="#a3a4a6"/><rect x="11" y="137" width="4" height="1" fill="#a3a4a6"/><rect x="0" y="147" width="15" height="1" fill="#a3a4a6"/><rect x="11" y="157" width="4" height="1" fill="#a3a4a6"/><rect x="11" y="167" width="4" height="1" fill="#a3a4a6"/><rect x="11" y="177" width="4" height="1" fill="#a3a4a6"/><rect x="11" y="187" width="4" height="1" fill="#a3a4a6"/><rect x="5" y="197" width="10" height="1" fill="#a3a4a6"/><rect x="11" y="207" width="4" height="1" fill="#a3a4a6"/><rect x="11" y="217" width="4" height="1" fill="#a3a4a6"/><rect x="11" y="227" width="4" height="1" fill="#a3a4a6"/><rect x="11" y="237" width="4" height="1" fill="#a3a4a6"/><rect x="0" y="247" width="15" height="1" fill="#a3a4a6"/><rect x="11" y="257" width="4" height="1" fill="#a3a4a6"/><rect x="11" y="267" width="4" height="1" fill="#a3a4a6"/><rect x="11" y="277" width="4" height="1" fill="#a3a4a6"/><rect x="11" y="287" width="4" height="1" fill="#a3a4a6"/><rect x="5" y="297" width="10" height="1" fill="#a3a4a6"/><rect x="11" y="307" width="4" height="1" fill="#a3a4a6"/><rect x="11" y="317" width="4" height="1" fill="#a3a4a6"/><rect x="11" y="327" width="4" height="1" fill="#a3a4a6"/><rect x="11" y="337" width="4" height="1" fill="#a3a4a6"/><rect x="0" y="347" width="15" height="1" fill="#a3a4a6"/><rect x="11" y="357" width="4" height="1" fill="#a3a4a6"/><rect x="11" y="367" width="4" height="1" fill="#a3a4a6"/><rect x="11" y="377" width="4" height="1" fill="#a3a4a6"/><rect x="11" y="387" width="4" height="1" fill="#a3a4a6"/><rect x="5" y="397" width="10" height="1" fill="#a3a4a6"/><text transform="translate(11,45.5) rotate(-90)" x="0" y="0" fill="#a3a4a6" font-size="8.5" font-family="Liberation Sans">0</text><text transform="translate(11,145.5) rotate(-90)" x="0" y="0" fill="#a3a4a6" font-size="8.5" font-family="Liberation Sans">100</text><text transform="translate(11,245.5) rotate(-90)" x="0" y="0" fill="#a3a4a6" font-size="8.5" font-family="Liberation Sans">200</text><text transform="translate(11,345.5) rotate(-90)" x="0" y="0" fill="#a3a4a6" font-size="8.5" font-family="Liberation Sans">300</text></svg>
<svg style="left:298px;top:86px" width="1013" height="405" viewBox="0 0 1013 405"><rect x="4" y="397" width="993" height="4" rx="2" fill="#5a5a5a"/><rect x="365" y="396" width="517" height="6" rx="3" fill="#8c8c8c"/><rect x="1005" y="4" width="4" height="385" rx="2" fill="#5a5a5a"/><rect x="1004" y="107" width="6" height="117" rx="3" fill="#8c8c8c"/><defs><clipPath id="body"><path d="M421.5 132 C421.5 114 434 100.5 448 100.5 C462 100.5 474.5 114 474.5 132 V146 C474.5 160 462 167.5 448 167.5 C434 167.5 421.5 160 421.5 146Z" transform="translate(-298,-86)"/></clipPath></defs><g clip-path="url(#body)"><rect x="0" y="0" width="1011" height="403" fill="#3d7681"/><ellipse cx="150" cy="30" rx="31" ry="36" fill="#5a929c"/><rect x="139.5" y="54" width="20" height="40" fill="#538b95"/></g><circle cx="149.3" cy="40.8" r="15" fill="#95d5e0"/><circle cx="156.2" cy="41.3" r="3" fill="#2f6670"/><path d="M421.5 132 C421.5 114 434 100.5 448 100.5 C462 100.5 474.5 114 474.5 132 V146 C474.5 160 462 167.5 448 167.5 C434 167.5 421.5 160 421.5 146Z" transform="translate(-298,-86)" fill="none" stroke="#12b2d6" stroke-width="1"/><rect x="0" y="48" width="1013" height="1" fill="#d9475a"/><rect x="149" y="0" width="1" height="405" fill="#8fd14f"/><rect x="149" y="47" width="481" height="1" fill="#3fbf8c"/><rect x="149" y="48" width="481" height="1" fill="#a657b8"/><rect x="629" y="48" width="1" height="357" fill="#4d8fd6"/><rect x="630" y="48" width="1" height="357" fill="#3fbf8c"/><rect x="150" y="48" width="1" height="357" fill="#3fbf8c"/><rect x="149" y="49" width="1" height="356" fill="#6fa683"/><path d="M155.0 43.0 L159.5 47.5 L155.0 52.0 M165.0 43.0 L169.5 47.5 L165.0 52.0 M175.0 43.0 L179.5 47.5 L175.0 52.0 M185.0 43.0 L189.5 47.5 L185.0 52.0 M195.0 43.0 L199.5 47.5 L195.0 52.0 M205.0 43.0 L209.5 47.5 L205.0 52.0 M215.0 43.0 L219.5 47.5 L215.0 52.0 M225.0 43.0 L229.5 47.5 L225.0 52.0 M235.0 43.0 L239.5 47.5 L235.0 52.0 M245.0 43.0 L249.5 47.5 L245.0 52.0 M255.0 43.0 L259.5 47.5 L255.0 52.0 M265.0 43.0 L269.5 47.5 L265.0 52.0 M275.0 43.0 L279.5 47.5 L275.0 52.0 M285.0 43.0 L289.5 47.5 L285.0 52.0 M295.0 43.0 L299.5 47.5 L295.0 52.0 M305.0 43.0 L309.5 47.5 L305.0 52.0 M315.0 43.0 L319.5 47.5 L315.0 52.0 M325.0 43.0 L329.5 47.5 L325.0 52.0 M335.0 43.0 L339.5 47.5 L335.0 52.0 M345.0 43.0 L349.5 47.5 L345.0 52.0 M355.0 43.0 L359.5 47.5 L355.0 52.0 M365.0 43.0 L369.5 47.5 L365.0 52.0 M375.0 43.0 L379.5 47.5 L375.0 52.0 M385.0 43.0 L389.5 47.5 L385.0 52.0 M395.0 43.0 L399.5 47.5 L395.0 52.0 M405.0 43.0 L409.5 47.5 L405.0 52.0 M415.0 43.0 L419.5 47.5 L415.0 52.0 M425.0 43.0 L429.5 47.5 L425.0 52.0 M435.0 43.0 L439.5 47.5 L435.0 52.0 M445.0 43.0 L449.5 47.5 L445.0 52.0 M455.0 43.0 L459.5 47.5 L455.0 52.0 M465.0 43.0 L469.5 47.5 L465.0 52.0 M475.0 43.0 L479.5 47.5 L475.0 52.0 M485.0 43.0 L489.5 47.5 L485.0 52.0 M495.0 43.0 L499.5 47.5 L495.0 52.0 M505.0 43.0 L509.5 47.5 L505.0 52.0 M515.0 43.0 L519.5 47.5 L515.0 52.0 M525.0 43.0 L529.5 47.5 L525.0 52.0 M535.0 43.0 L539.5 47.5 L535.0 52.0 M545.0 43.0 L549.5 47.5 L545.0 52.0 M555.0 43.0 L559.5 47.5 L555.0 52.0 M565.0 43.0 L569.5 47.5 L565.0 52.0 M575.0 43.0 L579.5 47.5 L575.0 52.0 M585.0 43.0 L589.5 47.5 L585.0 52.0 M595.0 43.0 L599.5 47.5 L595.0 52.0 M605.0 43.0 L609.5 47.5 L605.0 52.0 M615.0 43.0 L619.5 47.5 L615.0 52.0 M625.0 43.0 L629.5 47.5 L625.0 52.0 M625.5 52.5 L630.5 57.5 L635.5 52.5 M625.5 62.5 L630.5 67.5 L635.5 62.5 M625.5 72.5 L630.5 77.5 L635.5 72.5 M625.5 82.5 L630.5 87.5 L635.5 82.5 M625.5 92.5 L630.5 97.5 L635.5 92.5 M625.5 102.5 L630.5 107.5 L635.5 102.5 M625.5 112.5 L630.5 117.5 L635.5 112.5 M625.5 122.5 L630.5 127.5 L635.5 122.5 M625.5 132.5 L630.5 137.5 L635.5 132.5 M625.5 142.5 L630.5 147.5 L635.5 142.5 M625.5 152.5 L630.5 157.5 L635.5 152.5 M625.5 162.5 L630.5 167.5 L635.5 162.5 M625.5 172.5 L630.5 177.5 L635.5 172.5 M625.5 182.5 L630.5 187.5 L635.5 182.5 M625.5 192.5 L630.5 197.5 L635.5 192.5 M625.5 202.5 L630.5 207.5 L635.5 202.5 M625.5 212.5 L630.5 217.5 L635.5 212.5 M625.5 222.5 L630.5 227.5 L635.5 222.5 M625.5 232.5 L630.5 237.5 L635.5 232.5 M625.5 242.5 L630.5 247.5 L635.5 242.5 M625.5 252.5 L630.5 257.5 L635.5 252.5 M625.5 262.5 L630.5 267.5 L635.5 262.5 M625.5 272.5 L630.5 277.5 L635.5 272.5 M625.5 282.5 L630.5 287.5 L635.5 282.5 M625.5 292.5 L630.5 297.5 L635.5 292.5 M625.5 302.5 L630.5 307.5 L635.5 302.5 M625.5 312.5 L630.5 317.5 L635.5 312.5 M625.5 322.5 L630.5 327.5 L635.5 322.5 M625.5 332.5 L630.5 337.5 L635.5 332.5 M625.5 342.5 L630.5 347.5 L635.5 342.5 M625.5 352.5 L630.5 357.5 L635.5 352.5 M625.5 362.5 L630.5 367.5 L635.5 362.5 M625.5 372.5 L630.5 377.5 L635.5 372.5 M625.5 382.5 L630.5 387.5 L635.5 382.5 M625.5 392.5 L630.5 397.5 L635.5 392.5 M146.0 62.30000000000001 L150.5 57.80000000000001 L155.0 62.30000000000001 M146.0 72.30000000000001 L150.5 67.80000000000001 L155.0 72.30000000000001 M146.0 82.30000000000001 L150.5 77.80000000000001 L155.0 82.30000000000001 M146.0 92.30000000000001 L150.5 87.80000000000001 L155.0 92.30000000000001 M146.0 102.30000000000001 L150.5 97.80000000000001 L155.0 102.30000000000001 M146.0 112.30000000000001 L150.5 107.80000000000001 L155.0 112.30000000000001 M146.0 122.30000000000001 L150.5 117.80000000000001 L155.0 122.30000000000001 M146.0 132.3 L150.5 127.80000000000001 L155.0 132.3 M146.0 142.3 L150.5 137.8 L155.0 142.3 M146.0 152.3 L150.5 147.8 L155.0 152.3 M146.0 162.3 L150.5 157.8 L155.0 162.3 M146.0 172.3 L150.5 167.8 L155.0 172.3 M146.0 182.3 L150.5 177.8 L155.0 182.3 M146.0 192.3 L150.5 187.8 L155.0 192.3 M146.0 202.3 L150.5 197.8 L155.0 202.3 M146.0 212.3 L150.5 207.8 L155.0 212.3 M146.0 222.3 L150.5 217.8 L155.0 222.3 M146.0 232.3 L150.5 227.8 L155.0 232.3 M146.0 242.3 L150.5 237.8 L155.0 242.3 M146.0 252.3 L150.5 247.8 L155.0 252.3 M146.0 262.3 L150.5 257.8 L155.0 262.3 M146.0 272.3 L150.5 267.8 L155.0 272.3 M146.0 282.3 L150.5 277.8 L155.0 282.3 M146.0 292.3 L150.5 287.8 L155.0 292.3 M146.0 302.3 L150.5 297.8 L155.0 302.3 M146.0 312.3 L150.5 307.8 L155.0 312.3 M146.0 322.3 L150.5 317.8 L155.0 322.3 M146.0 332.3 L150.5 327.8 L155.0 332.3 M146.0 342.3 L150.5 337.8 L155.0 342.3 M146.0 352.3 L150.5 347.8 L155.0 352.3 M146.0 362.3 L150.5 357.8 L155.0 362.3 M146.0 372.3 L150.5 367.8 L155.0 372.3 M146.0 382.3 L150.5 377.8 L155.0 382.3 M146.0 392.3 L150.5 387.8 L155.0 392.3 M146.0 402.3 L150.5 397.8 L155.0 402.3 M629.5 48.5 L625 53 L629.5 57.5" stroke="#3fbf8c" stroke-width="1.25" fill="none" opacity="0.95"/><rect x="148.5" y="40.5" width="3.0" height="4.0" fill="#d6dcd4" stroke="#3a5552" stroke-width="1"/><rect x="148.5" y="51.5" width="3.0" height="4.0" fill="#d6dcd4" stroke="#3a5552" stroke-width="1"/><rect x="142.5" y="46.5" width="4.0" height="3.0" fill="#d6dcd4" stroke="#3a5552" stroke-width="1"/><rect x="153.5" y="46.5" width="4.0" height="3.0" fill="#d6dcd4" stroke="#3a5552" stroke-width="1"/><circle cx="149.7" cy="47.80000000000001" r="3" fill="#c9d6cf" opacity="0.9"/><rect x="151" y="53.5" width="8" height="9.5" fill="#e8e8e8" stroke="#2a2a2a" stroke-width="1"/><rect x="158.5" y="49.5" width="6.0" height="6.0" fill="none" stroke="#2a2a2a" stroke-width="3"/><rect x="158.5" y="49.5" width="6.0" height="6.0" fill="none" stroke="#ececec" stroke-width="1.6"/><rect x="162.5" y="60.5" width="3.0" height="3.0" fill="#f0f0f0" stroke="#2a2a2a" stroke-width="0.8"/><g transform="translate(12,11)"><rect x="5" y="5" width="3.8" height="3.8" fill="#e0e0e0"/><g fill="none" stroke="#e0e0e0" stroke-width="1.6" stroke-linecap="square"><path d="M4.8 0.8 L7 3 L9.2 0.8"/><path d="M4.8 13.2 L7 11 L9.2 13.2"/><path d="M0.8 4.8 L3 7 L0.8 9.2"/><path d="M13.2 4.8 L11 7 L13.2 9.2"/></g></g><circle cx="51.10000000000002" cy="18.099999999999994" r="7.8" fill="#2b2b2b" opacity="0.7"/><circle cx="51.10000000000002" cy="18.099999999999994" r="7.2" fill="#e0e0e0"/><rect x="47" y="17" width="8" height="2" fill="#3a3a3a"/><circle cx="135.2" cy="18.099999999999994" r="7.8" fill="#2b2b2b" opacity="0.7"/><circle cx="135.2" cy="18.099999999999994" r="7.2" fill="#e0e0e0"/><rect x="131" y="17" width="8" height="2" fill="#3a3a3a"/><rect x="134" y="14" width="2" height="8" fill="#3a3a3a"/><text x="74.30000000000001" y="23" fill="#e8e8e8" font-size="14" letter-spacing="-0.4" font-family="Liberation Sans">100 %</text></svg>
<div style="left:283px;top:71px;width:1028px;height:420px;box-sizing:border-box;border:2px solid rgba(112,186,250,0.62)"></div>
<div style="left:283px;top:499px;width:1028px;height:28px;background:#252b34;border-radius:3px 3px 0 0;"></div>
<div style="left:379px;top:499px;width:102px;height:28px;background:#363d4a;"></div>
<div style="left:379px;top:499px;width:102px;height:2px;background:#5c94c6;"></div>
<span style="left:294.40px;top:503px;color:#7d8085;font-size:14px;line-height:20px;letter-spacing:-0.188px;">Stack Trace</span>
<svg style="left:390px;top:509px" width="8" height="8" viewBox="0 0 8 8"><clipPath id="hl"><rect x="0" y="0" width="4" height="8"/></clipPath><circle cx="4" cy="4" r="4" fill="#ffde66"/><circle cx="4" cy="4" r="4" fill="#ff786b" clip-path="url(#hl)"/></svg>
<span style="left:401.60px;top:503px;color:#cdcfd2;font-size:14px;line-height:20px;letter-spacing:0.177px;">Errores (2)</span>
<span style="left:491.50px;top:503px;color:#7d8085;font-size:14px;line-height:20px;letter-spacing:0.502px;">Profiler</span>
<span style="left:563.10px;top:503px;color:#7d8085;font-size:14px;line-height:20px;letter-spacing:0.254px;">Visual Profiler</span>
<span style="left:675.40px;top:503px;color:#7d8085;font-size:14px;line-height:20px;letter-spacing:0.691px;">Monitores</span>
<span style="left:765.40px;top:503px;color:#7d8085;font-size:14px;line-height:20px;letter-spacing:0.232px;">Mem_ de Video</span>
<span style="left:888.40px;top:503px;color:#7d8085;font-size:14px;line-height:20px;letter-spacing:0.376px;">Misc</span>
<span style="left:940.50px;top:503px;color:#7d8085;font-size:14px;line-height:20px;letter-spacing:0.308px;">Profiler de Red</span>
<div style="left:283px;top:527px;width:1028px;height:259px;background:#363d4a;"></div>
<div style="left:287px;top:533px;width:113px;height:30px;background:#242a33;border-radius:3px;"></div>
<span style="left:292.30px;top:538px;color:#cdcfd2;font-size:14px;line-height:20px;letter-spacing:0.354px;">Expandir Todos</span>
<div style="left:404px;top:533px;width:113px;height:30px;background:#242a33;border-radius:3px;"></div>
<span style="left:410.30px;top:538px;color:#cdcfd2;font-size:14px;line-height:20px;letter-spacing:0.202px;">Colapsar Todos</span>
<div style="left:1245px;top:533px;width:62px;height:30px;background:#242a33;border-radius:3px;"></div>
<span style="left:1250.80px;top:538px;color:#cdcfd2;font-size:14px;line-height:20px;letter-spacing:0.660px;">Limpiar</span>
<div style="left:287px;top:567px;width:1020px;height:177px;background:#21262e;border-radius:3px;"></div>
<div style="left:291px;top:599px;width:1012px;height:28px;background:#374f66;border-radius:3px;"></div>
<svg style="left:294px;top:580px" width="7" height="9" viewBox="0 0 7 9"><path d="M1.5 1.2 L5 4.5 L1.5 7.8" fill="none" stroke="#8b8e93" stroke-width="2" stroke-linecap="round" stroke-linejoin="round"/></svg>
<svg style="left:294px;top:608px" width="7" height="9" viewBox="0 0 7 9"><path d="M1.5 1.2 L5 4.5 L1.5 7.8" fill="none" stroke="#8b8e93" stroke-width="2" stroke-linecap="round" stroke-linejoin="round"/></svg>
<svg style="left:307px;top:581px" width="8" height="8" viewBox="0 0 8 8"><circle cx="4" cy="4" r="4" fill="#ffde66"/></svg>
<svg style="left:307px;top:609px" width="8" height="8" viewBox="0 0 8 8"><circle cx="4" cy="4" r="4" fill="#ff786b"/></svg>
<span style="left:321.30px;top:575px;color:#ffde66;font-size:14px;line-height:20px;letter-spacing:0.058px;">0:00:00:0295</span>
<span style="left:441.00px;top:575px;color:#ffde66;font-size:14px;line-height:20px;letter-spacing:0.375px;">The parameter "body" is never used in the function "_on_body_entered()". If this is intended, prefix it with an underscore: "_body".</span>
<span style="left:321.30px;top:603px;color:#ff786b;font-size:14px;line-height:20px;letter-spacing:0.058px;">0:00:00:0304</span>
<span style="left:440.00px;top:603px;color:#ff786b;font-size:14px;line-height:20px;letter-spacing:0.389px;">Main.gd:18 @ new_game(): Node not found: "StartPosition" (relative to "/root/Main").</span>
<span style="left:293.20px;top:758px;color:#cdcfd2;font-size:14px;line-height:20px;letter-spacing:-0.146px;">Salida</span>
<svg style="left:349px;top:764px" width="8" height="8" viewBox="0 0 8 8"><clipPath id="hl2"><rect x="0" y="0" width="4" height="8"/></clipPath><circle cx="4" cy="4" r="4" fill="#80c270"/><circle cx="4" cy="4" r="4" fill="#8a6680" clip-path="url(#hl2)"/></svg>
<span style="left:360.50px;top:758px;color:#70bafa;font-size:14px;line-height:20px;letter-spacing:0.443px;">Depurador (2)</span>
<span style="left:468.60px;top:758px;color:#cdcfd2;font-size:14px;line-height:20px;letter-spacing:0.223px;">Resultados de la Búsqueda</span>
<span style="left:663.20px;top:758px;color:#cdcfd2;font-size:14px;line-height:20px;letter-spacing:0.270px;">Audio</span>
<span style="left:718.30px;top:758px;color:#cdcfd2;font-size:14px;line-height:20px;letter-spacing:0.528px;">Animación</span>
<span style="left:804.10px;top:758px;color:#cdcfd2;font-size:14px;line-height:20px;letter-spacing:0.230px;">Shader Editor</span>
<svg style="left:1170px;top:761px" width="14" height="14" viewBox="0 0 14 14"><g transform="rotate(-20 7 7)" fill="#5d6068"><path d="M7 0.8 C10 0.8 11 3 11 6 V9 L12.5 11 H1.5 L3 9 V6 C3 3 4 0.8 7 0.8Z"/><circle cx="7" cy="12.3" r="1.7"/></g></svg>
<span style="left:1195.20px;top:757px;color:#9a9ca1;font-size:14px;line-height:20px;letter-spacing:0.145px;">4.2.1.stable</span>
<svg style="left:1286px;top:761px" width="14" height="12" viewBox="0 0 14 12"><g fill="#e0e0e0"><rect x="0" y="0" width="14" height="2"/><path d="M3.5 3.5 L6.5 7 H4.5 V12 H2.5 V7 H0.5Z"/><path d="M10.5 3.5 L13.5 7 H11.5 V12 H9.5 V7 H7.5Z"/></g></svg>
</body></html>
